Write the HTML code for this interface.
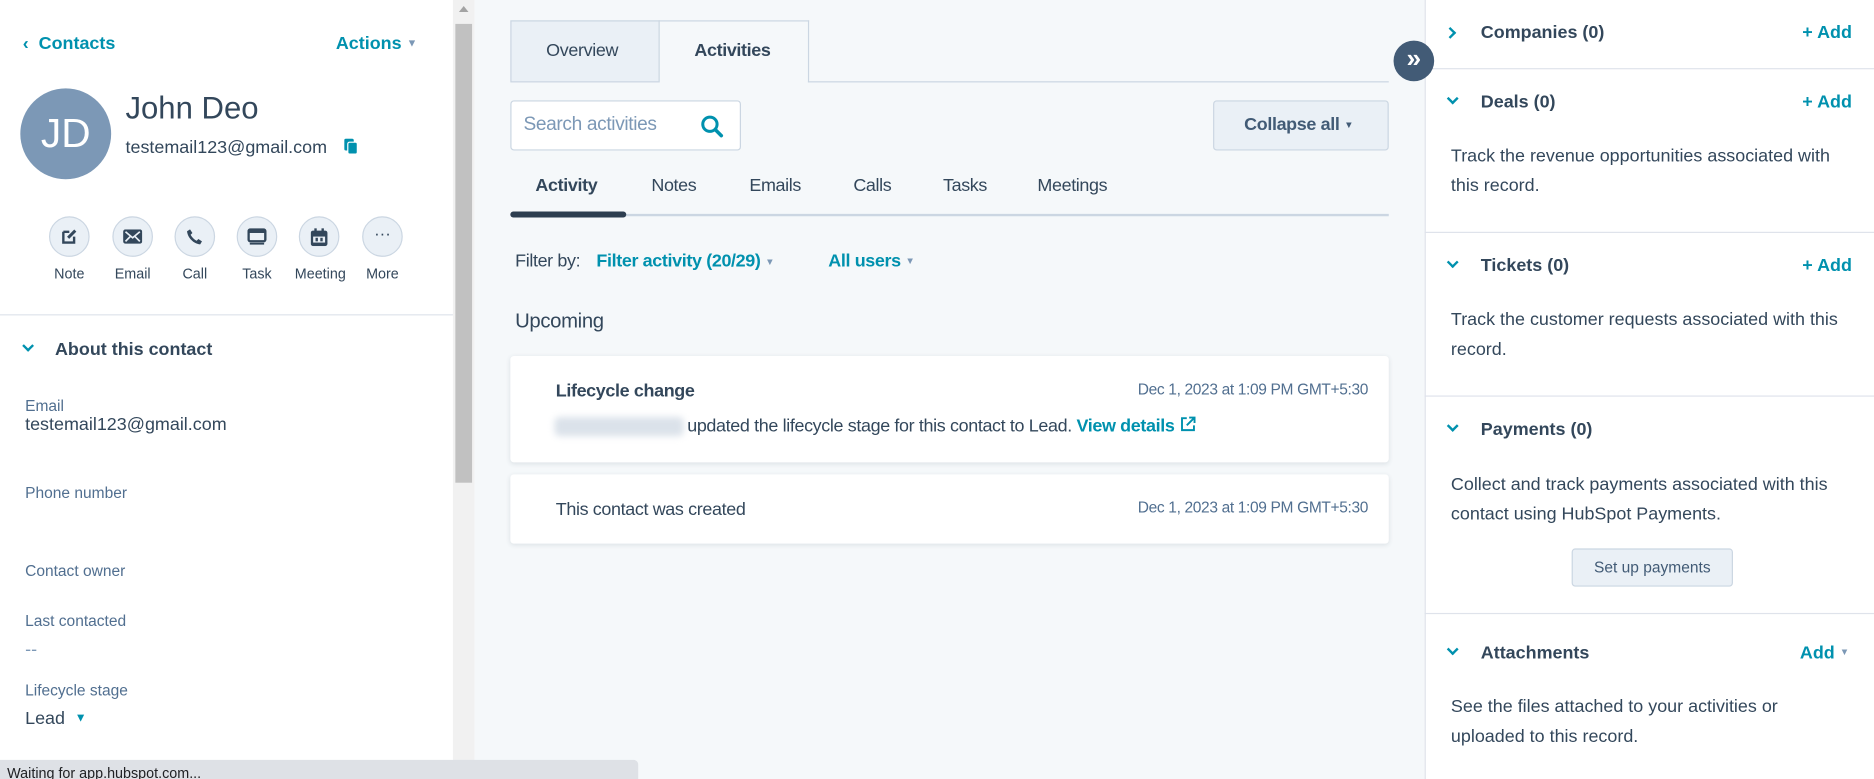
<!DOCTYPE html>
<html><head><meta charset="utf-8"><style>
*{margin:0;padding:0;box-sizing:border-box}
html,body{width:1874px;height:779px;overflow:hidden;background:#fff}
#s{position:absolute;left:0;top:0;width:1568px;height:652px;transform:scale(1.19515,1.1948);transform-origin:0 0;font-family:"Liberation Sans",sans-serif;color:#33475b}
.a{position:absolute;white-space:nowrap}
.t{color:#0091ae}
.b{font-weight:bold}
.btn{position:absolute;width:34px;height:34px;border-radius:50%;background:#eaf0f6;border:1px solid #cbd6e2;display:flex;align-items:center;justify-content:center}
.lbl{position:absolute;font-size:12px;width:60px;text-align:center;color:#33475b}
.fl{font-size:13px;color:#516f90}
.fv{font-size:15px}
.m{font-size:15px;letter-spacing:-.3px}
.card{position:absolute;left:427px;width:735px;background:#fff;border-radius:3px;box-shadow:0 1px 4px rgba(45,62,80,.12)}
.rh{font-size:15px;font-weight:bold}
.rd{font-size:15px;line-height:25px;color:#33475b}
.hr{position:absolute;left:1192px;width:376px;height:1px;background:#dfe3eb}
.chev{position:absolute;width:7px;height:7px;border-right:2px solid #0091ae;border-bottom:2px solid #0091ae;transform:rotate(45deg)}
</style></head><body><div id="s">
<div class="a" style="left:0;top:0;width:379px;height:652px;background:#fff"></div>
<div class="a t b" style="left:19px;top:28px;font-size:15px">‹&nbsp; Contacts</div>
<div class="a t b" style="left:281px;top:28px;font-size:15px">Actions <span style="font-size:9px;color:#7c98b6;vertical-align:2px">&#9660;</span></div>
<div class="a" style="left:17px;top:74px;width:76px;height:76px;border-radius:50%;background:#7c98b6;color:#fff;font-size:34px;text-align:center;line-height:76px">JD</div>
<div class="a" style="left:105px;top:75px;font-size:26px;color:#33475b">John Deo</div>
<div class="a" style="left:105px;top:115px;font-size:15px">testemail123@gmail.com</div>
<svg class="a" style="left:288px;top:116px" width="12" height="14" viewBox="0 0 12 14"><rect x="0" y="0" width="8" height="10" rx="1.5" fill="#0091ae"/><rect x="3" y="3" width="8" height="10" rx="1.5" fill="#0091ae" stroke="#fff" stroke-width="1"/></svg>
<div class="btn" style="left:41px;top:181px"><svg width="14" height="14" viewBox="0 0 14 14"><path d="M2 3h5M2 3v9h9V7" stroke="#33475b" stroke-width="2" fill="none"/><path d="M6 8l6-6" stroke="#33475b" stroke-width="2.5"/></svg></div>
<div class="btn" style="left:94px;top:181px"><svg width="16" height="12" viewBox="0 0 16 12"><rect x="0" y="0" width="16" height="12" rx="2" fill="#33475b"/><path d="M2 2l6 5 6-5M2 10l4-4M14 10l-4-4" stroke="#eaf0f6" stroke-width="1.4" fill="none"/></svg></div>
<div class="btn" style="left:146px;top:181px"><svg width="14" height="14" viewBox="0 0 14 14"><path d="M3 1l2 3-1.5 1.5c1 2 3 4 5 5L10 9l3 2-1.5 2.5C6 13 1 8 .5 2.5z" fill="#33475b"/></svg></div>
<div class="btn" style="left:198px;top:181px"><svg width="16" height="14" viewBox="0 0 16 14"><rect x="1" y="1" width="14" height="10" rx="1.5" fill="none" stroke="#33475b" stroke-width="2"/><rect x="1" y="1" width="14" height="3" fill="#33475b"/><path d="M2 13h12" stroke="#33475b" stroke-width="1.5"/></svg></div>
<div class="btn" style="left:250px;top:181px"><svg width="14" height="15" viewBox="0 0 14 15"><rect x="0" y="2" width="14" height="13" rx="2" fill="#33475b"/><rect x="3" y="0" width="2" height="4" fill="#33475b"/><rect x="9" y="0" width="2" height="4" fill="#33475b"/><rect x="2" y="7" width="10" height="5" fill="#eaf0f6"/><rect x="4" y="8" width="2" height="3" fill="#33475b"/><rect x="8" y="8" width="2" height="3" fill="#33475b"/></svg></div>
<div class="btn" style="left:303px;top:181px;font-size:14px;color:#33475b;line-height:1"><span style="margin-top:-6px">···</span></div>
<div class="lbl" style="left:28px;top:222px">Note</div>
<div class="lbl" style="left:81px;top:222px">Email</div>
<div class="lbl" style="left:133px;top:222px">Call</div>
<div class="lbl" style="left:185px;top:222px">Task</div>
<div class="lbl" style="left:238px;top:222px">Meeting</div>
<div class="lbl" style="left:290px;top:222px">More</div>
<div class="a" style="left:0;top:263px;width:379px;height:1px;background:#dfe3eb"></div>
<div class="chev" style="left:20px;top:286px"></div>
<div class="a b" style="left:46px;top:284px;font-size:15px">About this contact</div>
<div class="a fl" style="left:21px;top:332px">Email</div>
<div class="a fv" style="left:21px;top:347px">testemail123@gmail.com</div>
<div class="a fl" style="left:21px;top:405px">Phone number</div>
<div class="a fl" style="left:21px;top:470px">Contact owner</div>
<div class="a fl" style="left:21px;top:512px">Last contacted</div>
<div class="a fv" style="left:21px;top:535px;color:#7c98b6">--</div>
<div class="a fl" style="left:21px;top:570px">Lifecycle stage</div>
<div class="a fv" style="left:21px;top:593px">Lead <span style="font-size:10px;color:#0091ae;margin-left:4px;vertical-align:2px">&#9660;</span></div>
<div class="a" style="left:379px;top:0;width:18px;height:652px;background:#f1f1f1"></div>
<div class="a" style="left:381px;top:20px;width:14px;height:384px;background:#c1c1c1"></div>
<div class="a" style="left:384px;top:5px;width:0;height:0;border-left:4px solid transparent;border-right:4px solid transparent;border-bottom:5px solid #a3a3a3"></div>
<div class="a" style="left:397px;top:0;width:795px;height:652px;background:#f5f8fa"></div>
<div class="a" style="left:427px;top:17px;width:125px;height:52px;background:#eaf0f6;border:1px solid #cbd6e2"></div>
<div class="a m" style="left:457px;top:34px;color:#33475b">Overview</div>
<div class="a" style="left:551px;top:17px;width:126px;height:52px;background:#f5f8fa;border:1px solid #cbd6e2;border-bottom:none"></div>
<div class="a m b" style="left:581px;top:34px">Activities</div>
<div class="a" style="left:676px;top:68px;width:486px;height:1px;background:#cbd6e2"></div>
<div class="a" style="left:427px;top:84px;width:193px;height:42px;background:#fff;border:1px solid #cbd6e2;border-radius:3px"></div>
<div class="a" style="left:438px;top:96px;font-size:16px;color:#7c98b6;letter-spacing:-.3px">Search activities</div>
<svg class="a" style="left:586px;top:96px" width="20" height="20" viewBox="0 0 20 20"><circle cx="8" cy="8" r="6" fill="none" stroke="#0091ae" stroke-width="2.5"/><path d="M12.5 12.5l5 5" stroke="#0091ae" stroke-width="3" stroke-linecap="round"/></svg>
<div class="a" style="left:1015px;top:84px;width:147px;height:42px;background:#eaf0f6;border:1px solid #cbd6e2;border-radius:3px"></div>
<div class="a m b" style="left:1041px;top:96px;color:#425b76">Collapse all <span style="font-size:8px;vertical-align:2px">&#9660;</span></div>
<div class="a m b" style="left:448px;top:147px">Activity</div>
<div class="a m" style="left:545px;top:147px">Notes</div>
<div class="a m" style="left:627px;top:147px">Emails</div>
<div class="a m" style="left:714px;top:147px">Calls</div>
<div class="a m" style="left:789px;top:147px">Tasks</div>
<div class="a m" style="left:868px;top:147px">Meetings</div>
<div class="a" style="left:427px;top:179px;width:735px;height:2px;background:#cbd6e2"></div>
<div class="a" style="left:427px;top:177px;width:97px;height:5px;background:#2d3e50;border-radius:3px"></div>
<div class="a m" style="left:431px;top:210px">Filter by:</div>
<div class="a m b t" style="left:499px;top:210px">Filter activity (20/29) <span style="font-size:8px;color:#7c98b6;vertical-align:1px">&#9660;</span></div>
<div class="a m b t" style="left:693px;top:210px">All users <span style="font-size:8px;color:#7c98b6;vertical-align:2px">&#9660;</span></div>
<div class="a" style="left:431px;top:259px;font-size:17px;letter-spacing:-.3px">Upcoming</div>
<div class="card" style="top:298px;height:89px"></div>
<div class="a m b" style="left:465px;top:319px">Lifecycle change</div>
<div class="a" style="left:952px;top:318px;font-size:13px;color:#516f90;letter-spacing:-.3px">Dec 1, 2023 at 1:09 PM GMT+5:30</div>
<div class="a" style="left:464px;top:349px;width:108px;height:16px;background:#dbe2ea;filter:blur(3px);border-radius:4px"></div>
<div class="a m" style="left:575px;top:348px">updated the lifecycle stage for this contact to Lead. <span class="b t">View details</span> <svg width="14" height="14" viewBox="0 0 14 14" style="vertical-align:-1px"><path d="M6 2H2v10h10V8" fill="none" stroke="#0091ae" stroke-width="1.6"/><path d="M8 1.5h4.5V6M12.5 1.5L6 8" fill="none" stroke="#0091ae" stroke-width="1.6"/></svg></div>
<div class="card" style="top:397px;height:58px"></div>
<div class="a m" style="left:465px;top:418px">This contact was created</div>
<div class="a" style="left:952px;top:417px;font-size:13px;color:#516f90;letter-spacing:-.3px">Dec 1, 2023 at 1:09 PM GMT+5:30</div>
<div class="a" style="left:1192px;top:0;width:376px;height:652px;background:#fff;border-left:1px solid #dfe3eb"></div>
<div class="chev" style="left:1210px;top:24px;transform:rotate(-45deg)"></div>
<div class="a rh" style="left:1239px;top:19px">Companies (0)</div>
<div class="a rh t" style="left:1508px;top:19px">+ Add</div>
<div class="hr" style="top:57px"></div>
<div class="chev" style="left:1212px;top:79px"></div>
<div class="a rh" style="left:1239px;top:77px">Deals (0)</div>
<div class="a rh t" style="left:1508px;top:77px">+ Add</div>
<div class="a rd" style="left:1214px;top:118px">Track the revenue opportunities associated with<br>this record.</div>
<div class="hr" style="top:194px"></div>
<div class="chev" style="left:1212px;top:216px"></div>
<div class="a rh" style="left:1239px;top:214px">Tickets (0)</div>
<div class="a rh t" style="left:1508px;top:214px">+ Add</div>
<div class="a rd" style="left:1214px;top:255px">Track the customer requests associated with this<br>record.</div>
<div class="hr" style="top:331px"></div>
<div class="chev" style="left:1212px;top:353px"></div>
<div class="a rh" style="left:1239px;top:351px">Payments (0)</div>
<div class="a rd" style="left:1214px;top:393px">Collect and track payments associated with this<br>contact using HubSpot Payments.</div>
<div class="a" style="left:1315px;top:459px;width:135px;height:32px;background:#eaf0f6;border:1px solid #cbd6e2;border-radius:3px;font-size:13px;color:#425b76;text-align:center;line-height:30px">Set up payments</div>
<div class="hr" style="top:513px"></div>
<div class="chev" style="left:1212px;top:540px"></div>
<div class="a rh" style="left:1239px;top:538px">Attachments</div>
<div class="a rh t" style="left:1506px;top:538px">Add <span style="font-size:8px;color:#7c98b6;vertical-align:3px">&#9660;</span></div>
<div class="a rd" style="left:1214px;top:579px">See the files attached to your activities or<br>uploaded to this record.</div>
<div class="a" style="left:1166px;top:34px;width:34px;height:34px;border-radius:50%;background:#425b76;color:#fff;font-size:22px;text-align:center;line-height:30px;font-weight:bold">»</div>
<div class="a" style="left:0;top:636px;width:534px;height:16px;background:#dee1e6;border-top-right-radius:4px;font-size:12px;color:#202124;padding-left:6px;line-height:22px;overflow:hidden">Waiting for app.hubspot.com...</div>
</div></body></html>
